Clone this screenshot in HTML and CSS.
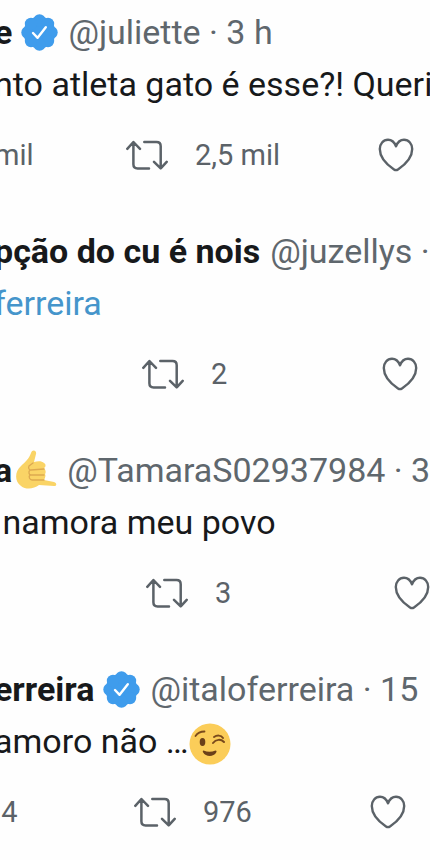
FILE: index.html
```html
<!DOCTYPE html>
<html lang="pt-BR">
<head>
    <meta charset="UTF-8">
    <meta name="viewport" content="width=device-width, initial-scale=1.0">
    <title>Tweets</title>
    <link rel="stylesheet" href="styles.css">
</head>
<body>
    <!-- shared icons -->
    <svg class="sprite" aria-hidden="true">
        <symbol id="verified" viewBox="0 0 37 37">
            <g fill="#3f9cec">
                <circle cx="18.5" cy="18.5" r="16"/>
                <circle cx="18.5" cy="6.5" r="6.2"/>
                <circle cx="27" cy="10" r="6.2"/>
                <circle cx="30.5" cy="18.5" r="6.2"/>
                <circle cx="27" cy="27" r="6.2"/>
                <circle cx="18.5" cy="30.5" r="6.2"/>
                <circle cx="10" cy="27" r="6.2"/>
                <circle cx="6.5" cy="18.5" r="6.2"/>
                <circle cx="10" cy="10" r="6.2"/>
            </g>
            <path d="M12 19l4.6 4.8 8.2-10.600" fill="none" stroke="#fff" stroke-width="2.4" stroke-linecap="round" stroke-linejoin="round"/>
        </symbol>
        <symbol id="retweet" viewBox="0 0 42 30">
            <path d="M1.3 8.8L7.4 2l6.6 6.8M7.4 2.4v21.8q0 4.2 4.2 4.2H23M18.3 2h12.2q4.2 0 4.2 4.2v22M28 21.8l6.7 6.6 6-6.6" fill="none" stroke="currentColor" stroke-width="2.5" stroke-linecap="round" stroke-linejoin="round"/>
        </symbol>
        <symbol id="heart" viewBox="0 0 36 34">
            <path d="M18 8.3C16.4 4.2 13.4 1.8 10 1.8 5.2 1.8 1.8 5.8 1.8 11c0 9.2 8.9 16.9 14.2 20.5q2 1.3 4 0C25.3 27.9 34.2 20.2 34.2 11c0-5.2-3.4-9.2-8.2-9.2-3.4 0-6.4 2.4-8 6.5z" fill="none" stroke="currentColor" stroke-width="2.4" stroke-linejoin="round"/>
        </symbol>
    </svg>

    <main class="feed">
        <article class="tweet">
            <header class="tweet-header">
                <strong class="name">e</strong>
                <svg class="badge" role="img" aria-label="Verificado"><use href="#verified"/></svg>
                <span class="meta"><a href="#">@juliette</a> · 3 h</span>
            </header>
            <p class="tweet-text">nto atleta gato é esse?! Queri</p>
            <div class="actions actions-wide">
                <button class="action">mil</button>
                <button class="action"><svg class="icon-retweet" aria-hidden="true"><use href="#retweet"/></svg>2,5 mil</button>
                <button class="action" aria-label="Curtir"><svg class="icon-heart" aria-hidden="true"><use href="#heart"/></svg></button>
            </div>
        </article>

        <article class="tweet">
            <header class="tweet-header">
                <strong class="name">pção do cu é nois</strong>
                <span class="meta"><a href="#">@juzellys</a> ·</span>
            </header>
            <p class="tweet-text"><a class="mention" href="#">ferreira</a></p>
            <div class="actions actions-narrow">
                <button class="action" aria-label="Responder"></button>
                <button class="action"><svg class="icon-retweet" aria-hidden="true"><use href="#retweet"/></svg>2</button>
                <button class="action" aria-label="Curtir"><svg class="icon-heart" aria-hidden="true"><use href="#heart"/></svg></button>
            </div>
        </article>

        <article class="tweet">
            <header class="tweet-header">
                <strong class="name">a</strong>
                <svg class="emoji" viewBox="0 0 42 42" role="img" aria-label="Me liga">
                    <path d="M16 4c1-4 6-3 5 1l-2 8c4-1 8-1 10 1 2 1 2 4 0 5 2 2 2 5 1 6 1 2 0 4-1 6l10 2c3 1 3 4 0 4l-15-1c-5 4-13 5-18 1C-1 32 0 22 6 17c4-4 8-7 10-13z" fill="#fad466"/>
                    <path d="M18 14l-4 3c-1 2 0 4 2 4l13-1M15 21c-2 2-1 5 1 5l13 0M15 26c-2 2 0 5 2 5l12 0" fill="none" stroke="#dda950" stroke-width="1.3" stroke-linecap="round"/>
                </svg>
                <span class="meta"><a href="#">@TamaraS02937984</a> · 3</span>
            </header>
            <p class="tweet-text">&nbsp;namora meu povo</p>
            <div class="actions actions-empty">
                <button class="action" aria-label="Responder"></button>
                <button class="action"><svg class="icon-retweet" aria-hidden="true"><use href="#retweet"/></svg>3</button>
                <button class="action" aria-label="Curtir"><svg class="icon-heart" aria-hidden="true"><use href="#heart"/></svg></button>
            </div>
        </article>

        <article class="tweet">
            <header class="tweet-header">
                <strong class="name">erreira</strong>
                <svg class="badge" role="img" aria-label="Verificado"><use href="#verified"/></svg>
                <span class="meta"><a href="#">@italoferreira</a> · 15</span>
            </header>
            <p class="tweet-text">amoro não …<svg class="emoji" viewBox="0 0 42 42" role="img" aria-label="Piscadela">
                    <circle cx="21" cy="21" r="20.5" fill="#fbcd59"/>
                    <path d="M6.5 13c2-3 5-4.5 9-4.5" fill="none" stroke="#7a4a1c" stroke-width="1.8" stroke-linecap="round"/>
                    <ellipse cx="13.5" cy="19" rx="2.8" ry="4" fill="#6b4019"/>
                    <path d="M24 20c3-4 8-4 11-1M25 14c3-2 7-2 9 1" fill="none" stroke="#7a4a1c" stroke-width="2" stroke-linecap="round"/>
                    <path d="M14.5 27.5c4 1.8 8 1.8 12 0 1 0 1.3 1 .8 1.8-2.5 5-10.5 5-13.3 0-.5-1 0-2 .5-1.8z" fill="#6b4019"/>
                </svg></p>
            <div class="actions">
                <button class="action">&nbsp;4</button>
                <button class="action"><svg class="icon-retweet" aria-hidden="true"><use href="#retweet"/></svg>976</button>
                <button class="action" aria-label="Curtir"><svg class="icon-heart" aria-hidden="true"><use href="#heart"/></svg></button>
            </div>
        </article>
    </main>
</body>
</html>
```
FILE: styles.css
```css
body {
    margin: 0;
    background-color: #fefefe;
    color: #17191b;
    font-family: Roboto, "Liberation Sans", sans-serif;
    font-size: 34px;
    overflow: hidden;
}
a {
    color: inherit;
    text-decoration: none;
}
.sprite {
    display: none;
}
.feed {
    margin-left: -6px;
    padding-top: 6px;
}
.tweet {
    padding-bottom: 48px;
}
.tweet-header {
    display: flex;
    align-items: center;
    line-height: 52px;
    white-space: nowrap;
}
.name {
    font-weight: 700;
}
.meta {
    margin-left: 10px;
    color: #5f676d;
}
.badge {
    flex: none;
    width: 37px;
    height: 37px;
    margin-left: 9px;
}
.emoji {
    flex: none;
    width: 42px;
    height: 42px;
    margin-left: 3px;
    vertical-align: middle;
}
.tweet-text {
    margin: 0;
    height: 52px;
    line-height: 52px;
    white-space: nowrap;
}
.tweet-text .emoji {
    margin-left: 0;
}
.mention {
    color: #4595cb;
}
.actions {
    display: grid;
    grid-template-columns: 140px 236px 1fr;
    height: 44px;
    margin-top: 23px;
}
.actions-wide {
    grid-template-columns: 132px 252px 1fr;
}
.actions-narrow {
    grid-template-columns: 148px 240px 1fr;
}
.actions-empty {
    grid-template-columns: 152px 248px 1fr;
}
.action {
    display: flex;
    align-items: center;
    gap: 27px;
    padding: 0;
    border: none;
    background: none;
    color: #5b6268;
    font-family: inherit;
    font-size: 29px;
    cursor: pointer;
}
.icon-retweet {
    width: 42px;
    height: 30px;
}
.icon-heart {
    width: 36px;
    height: 34px;
}
```
